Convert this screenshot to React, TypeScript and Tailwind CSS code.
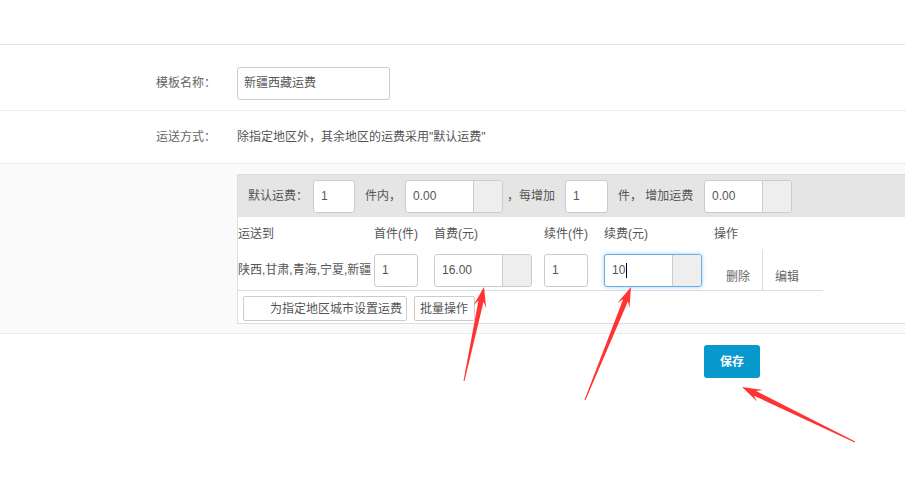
import React from "react";

const F = { fontFamily: '"Liberation Sans", "Noto Sans CJK SC", sans-serif' };

function Box({ w, value, addon, focused, caret }: { w: string; value: string; addon?: boolean; focused?: boolean; caret?: boolean }) {
  return (
    <div
      className={`${w} h-[33px] flex rounded-[3px] border bg-white overflow-hidden ${
        focused ? "border-[#66afe9] shadow-[0_0_4px_rgba(102,175,233,0.6)]" : "border-[#cccccc]"
      }`}
    >
      <div className="flex-1 flex items-center pl-[7px] text-[12px] text-[#555]">
        {value}
        {caret && <span className="inline-block w-px h-[15px] bg-black ml-[1px]" />}
      </div>
      {addon && <div className="w-[29px] h-full bg-[#eeeeee] border-l border-[#cccccc]" />}
    </div>
  );
}

function arrow(tx: number, ty: number, px: number, py: number) {
  const dx = px - tx, dy = py - ty;
  const len = Math.hypot(dx, dy);
  const ux = dx / len, uy = dy / len;
  const nx = -uy, ny = ux;
  const H = 20, W = 6.5, w = 2.6, t = 0.5;
  const bx = px - ux * H, by = py - uy * H;
  const kx = px - ux * H * 0.72, ky = py - uy * H * 0.72;
  const pts = [
    [tx + nx * t, ty + ny * t],
    [kx + nx * w, ky + ny * w],
    [bx + nx * W, by + ny * W],
    [px, py],
    [bx - nx * W, by - ny * W],
    [kx - nx * w, ky - ny * w],
    [tx - nx * t, ty - ny * t],
  ];
  return pts.map((p) => p.join(",")).join(" ");
}

export default function App() {
  return (
    <div className="relative w-[905px] h-[482px] overflow-hidden bg-white text-[12px] text-[#555]" style={F}>
      <div className="h-[44px]" />
      <div className="border-t border-[#e5e5e5]" />
      {/* row 1 */}
      <div className="flex items-center h-[54px] pt-[11px] border-b border-dotted border-[#dddddd] box-content">
        <div className="w-[237px] pl-[156px] text-[#666]">模板名称：</div>
        <div className="w-[153px] h-[33px] rounded-[3px] border border-[#cccccc] flex items-center pl-[6px] text-[#555]">新疆西藏运费</div>
      </div>
      {/* row 2 */}
      <div className="flex items-center h-[52px] border-b border-dotted border-[#dddddd] box-content">
        <div className="w-[237px] pl-[156px] text-[#666]">运送方式：</div>
        <div className="text-[#555]">除指定地区外，其余地区的运费采用"默认运费"</div>
      </div>
      {/* row 3 */}
      <div className="flex bg-[#fafafa] pt-[10px] pb-[9px] border-b border-dotted border-[#dddddd]">
        <div className="w-[237px] shrink-0" />
        <div className="flex-1 border border-r-0 border-[#dddddd] bg-white">
          <div className="h-[42px] bg-[#e5e5e5] flex items-center pl-[10px] text-[#555]">
            <span className="w-[65px] shrink-0">默认运费：</span>
            <Box w="w-[42px]" value="1" />
            <span className="w-[50px] shrink-0 pl-[10px]">件内，</span>
            <Box w="w-[98px]" value="0.00" addon />
            <span className="w-[62px] shrink-0 pl-[4px]">，每增加</span>
            <Box w="w-[43px]" value="1" />
            <span className="w-[96px] shrink-0 pl-[10px]">件，&nbsp;增加运费</span>
            <Box w="w-[88px]" value="0.00" addon />
          </div>
          <div className="w-[585px]">
            <div className="flex h-[33px] items-center pt-[1px] text-[#555]">
              <div className="w-[136px]">运送到</div>
              <div className="w-[60px]">首件(件)</div>
              <div className="w-[110px]">首费(元)</div>
              <div className="w-[60px]">续件(件)</div>
              <div className="w-[110px]">续费(元)</div>
              <div className="w-[48px]">操作</div>
              <div className="w-[61px]" />
            </div>
            <div className="flex h-[40px] items-center border-b border-[#dddddd] box-content">
              <div className="w-[136px] text-[#555]">陕西,甘肃,青海,宁夏,新疆</div>
              <div className="w-[60px]"><Box w="w-[44px]" value="1" /></div>
              <div className="w-[110px]"><Box w="w-[98px]" value="16.00" addon /></div>
              <div className="w-[60px]"><Box w="w-[44px]" value="1" /></div>
              <div className="w-[110px]"><Box w="w-[98px]" value="10" addon focused caret /></div>
              <div className="w-[48px] self-stretch flex items-end justify-center pb-[4px] text-[#666]">删除</div>
              <div className="w-[61px] self-stretch -mt-px border-l border-[#dddddd] flex items-end pl-[12px] pb-[4px] text-[#666]">编辑</div>
            </div>
          </div>
          <div className="h-[32px] flex pt-[5px] pl-[5px] gap-[7px]">
            <div className="w-[164px] h-[25px] border border-[#cccccc] rounded-[2px] bg-white flex items-center pl-[26px] text-[#555]">为指定地区城市设置运费</div>
            <div className="w-[61px] h-[25px] border border-[#cccccc] rounded-[2px] bg-white flex items-center pl-[5px] text-[#555]">批量操作</div>
          </div>
        </div>
      </div>
      {/* save */}
      <div className="pl-[704px] pt-[11px]">
        <div className="w-[56px] h-[33px] rounded-[3px] bg-[#0799cb] flex items-center justify-center text-white font-bold">保存</div>
      </div>
      <svg className="absolute inset-0 pointer-events-none" width="905" height="482">
        <polygon points={arrow(464, 381, 484, 287)} fill="#ff3333" />
        <polygon points={arrow(585, 400, 631, 287)} fill="#ff3333" />
        <polygon points={arrow(855, 442, 742, 387)} fill="#ff3333" />
      </svg>
    </div>
  );
}
